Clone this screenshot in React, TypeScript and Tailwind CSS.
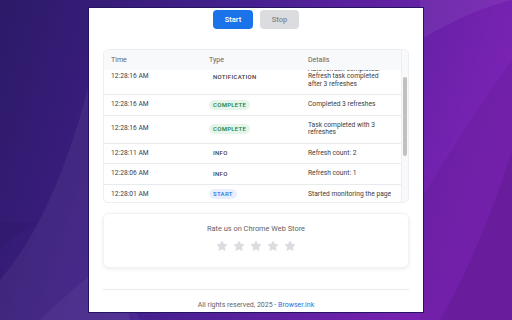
import { Star } from "lucide-react";

type Row = {
    time: string;
    type: string;
    details: string[];
};

const rows: Row[] = [
    {
        time: "12:28:16 AM",
        type: "NOTIFICATION",
        details: ["Auto-refresh completed.", "Refresh task completed", "after 3 refreshes"],
    },
    { time: "12:28:16 AM", type: "COMPLETE", details: ["Completed 3 refreshes"] },
    { time: "12:28:16 AM", type: "COMPLETE", details: ["Task completed with 3", "refreshes"] },
    { time: "12:28:11 AM", type: "INFO", details: ["Refresh count: 2"] },
    { time: "12:28:06 AM", type: "INFO", details: ["Refresh count: 1"] },
    { time: "12:28:01 AM", type: "START", details: ["Started monitoring the page"] },
];

function Badge({ type }: { type: string }) {
    if (type === "COMPLETE") {
        return (
            <span className="inline-block rounded-full bg-[#e6f4ea] px-[4px] py-[1px] text-[#188038] leading-[8px]">
                {type}
            </span>
        );
    }
    if (type === "START") {
        return (
            <span className="inline-block rounded-full bg-[#e8f0fe] px-[4px] py-[1px] text-[#1a73e8] leading-[8px]">
                {type}
            </span>
        );
    }
    return (
        <span className="inline-block px-[4px] py-[1px] text-[#3c4043] leading-[8px]">
            {type}
        </span>
    );
}

function Background() {
    return (
        <svg className="absolute inset-0" width="512" height="320" viewBox="0 0 512 320">
            <defs>
                <linearGradient id="bg" x1="0" y1="0" x2="1" y2="0.2">
                    <stop offset="0" stopColor="#2c1a68" />
                    <stop offset="0.45" stopColor="#44208e" />
                    <stop offset="1" stopColor="#7a22b4" />
                </linearGradient>
            </defs>
            <rect width="512" height="320" fill="url(#bg)" />
            <path d="M0 320 L0 280 Q60 210 95 60 L130 320 Z" fill="#ffffff" opacity="0.05" />
            <path d="M40 320 Q70 290 110 260 L140 320 Z" fill="#ffffff" opacity="0.04" />
            <path d="M0 250 Q20 230 40 222 L0 222 Z" fill="#000000" opacity="0.04" />
            <path d="M420 40 Q470 10 512 0 L420 0 Z" fill="#ffffff" opacity="0.06" />
            <path d="M512 60 Q470 120 420 200 L420 320 L512 320 Z" fill="#000000" opacity="0.06" />
            <path d="M512 150 Q480 250 440 320 L512 320 Z" fill="#000000" opacity="0.07" />
        </svg>
    );
}

export default function App() {
    return (
        <div className="relative w-[512px] h-[320px] overflow-hidden font-['Roboto',sans-serif]">
            <Background />
            <div className="relative flex justify-center pt-[7px]">
                <div className="w-[336px] h-[306px] bg-white border border-[#241560] px-[14px] flex flex-col">
                    <div className="flex justify-center gap-[7px] pt-[2px]">
                        <button className="w-[40px] h-[19px] rounded-[4px] bg-[#1a73e8] text-white text-[7.5px] font-medium">
                            Start
                        </button>
                        <button className="w-[39px] h-[19px] rounded-[4px] bg-[#dadce0] text-[#80868b] text-[7.5px] font-medium">
                            Stop
                        </button>
                    </div>

                    <div className="mt-[20px] h-[154px] rounded-[5px] border border-[#eceef1] flex overflow-hidden">
                        <div className="flex-1 flex flex-col">
                            <div className="h-[20px] shrink-0 bg-[#f8f9fa] grid grid-cols-3 items-center text-[7px] text-[#5f6368]">
                                <div className="pl-[7px]">Time</div>
                                <div className="pl-[6px]">Type</div>
                                <div className="pl-[6px]">Details</div>
                            </div>
                            <div className="flex-1 overflow-hidden">
                                <div className="-mt-[10.5px]">
                                    {rows.map((r, i) => (
                                        <div
                                            key={i}
                                            className="grid grid-cols-3 items-center py-[6px] border-b border-[#e8eaed] text-[6.7px] text-[#3c4043] leading-[7.5px]"
                                        >
                                            <div className="pl-[7px]">{r.time}</div>
                                            <div className="pl-[6px] h-[7.5px] flex items-center text-[6px] font-medium tracking-[0.3px]">
                                                <Badge type={r.type} />
                                            </div>
                                            <div className="pl-[6px]">
                                                {r.details.map((d, j) => (
                                                    <div key={j}>{d}</div>
                                                ))}
                                            </div>
                                        </div>
                                    ))}
                                </div>
                            </div>
                        </div>
                        <div className="w-[7px] shrink-0 bg-[#f8f9fa] border-l border-[#eceef1] pt-[27px]">
                            <div className="mx-auto w-[4px] h-[79px] rounded-full bg-[#c1c1c1]" />
                        </div>
                    </div>

                    <div className="mt-[10px] h-[55px] rounded-[6px] bg-white shadow-[0_1px_4px_rgba(0,0,0,0.08)] border border-[#f1f3f4] flex flex-col items-center pt-[9px]">
                        <div className="text-[7.4px] text-[#5f6368]">Rate us on Chrome Web Store</div>
                        <div className="flex gap-[5px] mt-[6px]">
                            {[0, 1, 2, 3, 4].map((i) => (
                                <Star key={i} size={12} fill="#dadce0" stroke="#dadce0" strokeWidth={1} />
                            ))}
                        </div>
                    </div>

                    <div className="mt-[21px] border-t border-[#e8eaed]" />
                    <div className="mt-[10px] text-center text-[7px] text-[#5f6368]">
                        All rights reserved, 2025 - <span className="text-[#1a73e8]">Browser.ink</span>
                    </div>
                </div>
            </div>
        </div>
    );
}
